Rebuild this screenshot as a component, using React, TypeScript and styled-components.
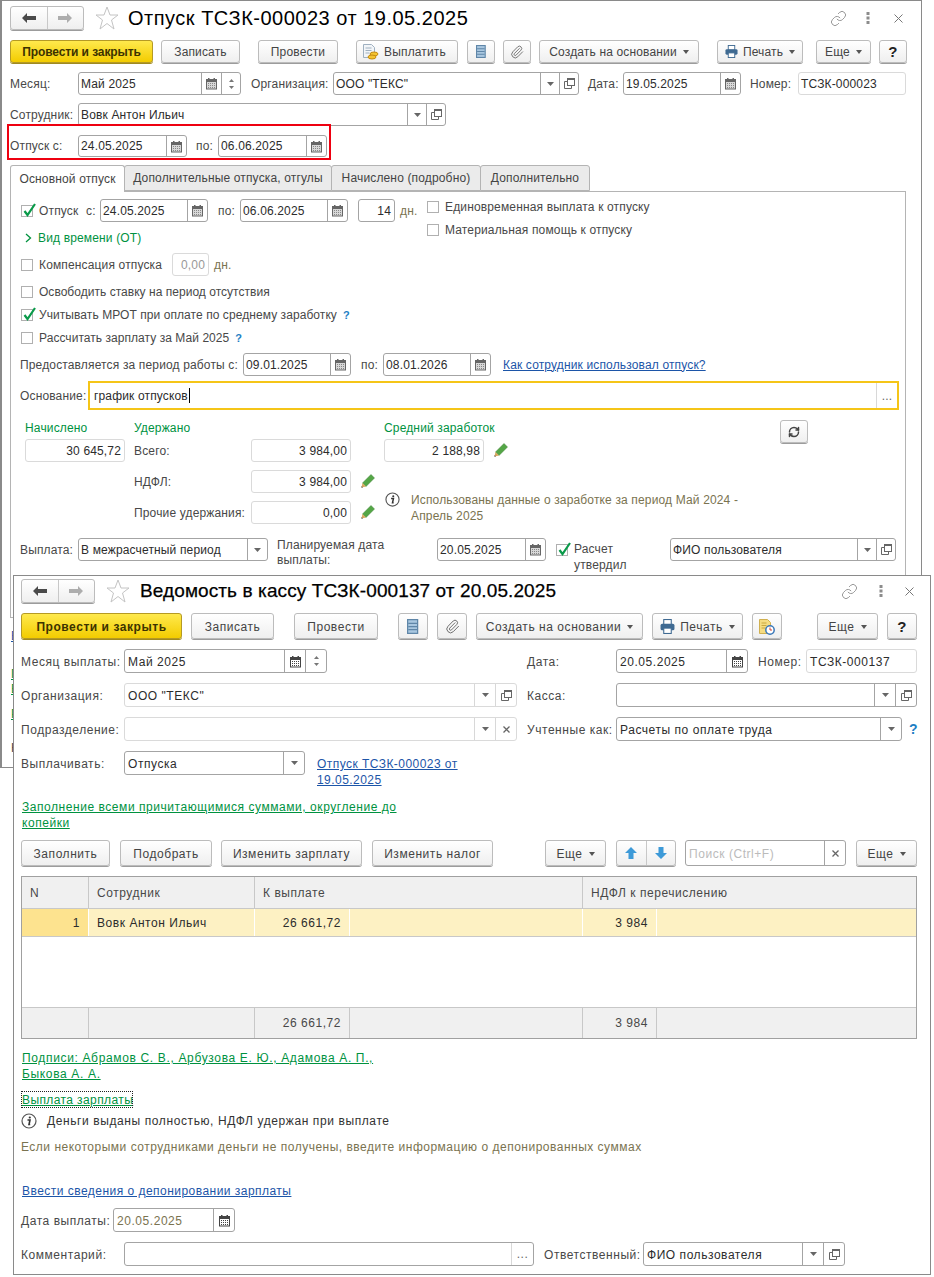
import * as React from 'react';
import styled, {createGlobalStyle} from 'styled-components';
import {Link as LinkIcon, Paperclip, RefreshCw} from 'lucide-react';

const Global = createGlobalStyle`
  html, body {
    margin: 0;
    background: white;
  }
  body {
    font-family: "Liberation Sans", Arial, sans-serif;
    font-size: 12px;
    color: #333;
  }
  * {
    box-sizing: border-box;
  }
`;

const Desktop = styled.div`
  position: relative;
  width: 934px;
  height: 1277px;
  overflow: hidden;
`;

const Win = styled.section<{$x: number; $y: number; $w: number; $h: number; $bl: number; $ls: number; $nudge: number; $pad: number}>`
  --nudge: ${p => p.$nudge}px;
  --pad: ${p => p.$pad}px;
  position: absolute;
  left: ${p => p.$x}px;
  top: ${p => p.$y}px;
  width: ${p => p.$w}px;
  height: ${p => p.$h}px;
  background: white;
  border: 1px solid #8a8a8a;
  border-left-width: ${p => p.$bl}px;
  letter-spacing: ${p => p.$ls}px;
  overflow: hidden;
`;

const Row = styled.div<{$mt: number; $h: number; $pl: number}>`
  position: relative;
  display: flex;
  align-items: center;
  margin-top: ${p => p.$mt}px;
  height: ${p => p.$h}px;
  padding-left: ${p => p.$pl}px;
`;

const NavGroup = styled.div<{$w: number; $h: number; $ml?: number}>`
  display: flex;
  flex: none;
  width: ${p => p.$w}px;
  height: ${p => p.$h}px;
  margin-left: ${p => p.$ml ?? 0}px;
  background: linear-gradient(#fff, #efefef);
  border: 1px solid #bcbcbc;
  border-radius: 3px;
  box-shadow: 0 1px 0 #9c9c9c;
`;

const NavPart = styled.div<{$divider?: boolean}>`
  flex: 1;
  display: flex;
  align-items: center;
  justify-content: center;
  border-right: ${p => (p.$divider ? '1px solid #c8c8c8' : 'none')};
`;

const StarWrap = styled.span<{$ml: number}>`
  flex: none;
  height: 24px;
  margin-left: ${p => p.$ml}px;
`;

const Title = styled.h1<{$size: number; $ml: number; $ls: number; $stroke: number; $pt: number}>`
  margin: 0 0 0 ${p => p.$ml}px;
  padding-top: ${p => p.$pt}px;
  font-size: ${p => p.$size}px;
  font-weight: 400;
  color: #000;
  letter-spacing: ${p => p.$ls}px;
  -webkit-text-stroke: ${p => p.$stroke}px #000;
  white-space: nowrap;
`;

const Controls = styled.div<{$pr: number}>`
  display: flex;
  align-items: center;
  margin-left: auto;
  padding-right: ${p => p.$pr}px;
  color: #7c7c7c;
`;

const Ctl = styled.span<{$ml?: number}>`
  display: flex;
  margin-left: ${p => p.$ml ?? 0}px;
`;

const Btn = styled.div<{$w: number; $ml?: number; $primary?: boolean; $ls?: number; $pr?: number}>`
  display: flex;
  flex: none;
  align-items: center;
  justify-content: center;
  gap: 5px;
  width: ${p => p.$w}px;
  height: 100%;
  margin-left: ${p => p.$ml ?? 0}px;
  padding-top: var(--nudge);
  padding-right: ${p => p.$pr ?? 0}px;
  border: 1px solid ${p => (p.$primary ? '#b59a24' : '#bcbcbc')};
  border-radius: 3px;
  background: ${p => (p.$primary ? 'linear-gradient(#ffe94d, #f3cc00)' : 'linear-gradient(#fff, #efefef)')};
  box-shadow: 0 1px 0 ${p => (p.$primary ? '#a08a20' : '#9c9c9c')};
  color: ${p => (p.$primary ? '#3c3200' : '#444')};
  font-weight: ${p => (p.$primary ? 700 : 400)};
  letter-spacing: ${p => (p.$ls === undefined ? 'inherit' : `${p.$ls}px`)};
  white-space: nowrap;
`;

const Caret = styled.span`
  width: 0;
  height: 0;
  margin-left: 1px;
  margin-top: 1px;
  border-left: 3.5px solid transparent;
  border-right: 3.5px solid transparent;
  border-top: 4px solid #555;
`;

const Help = styled.b`
  color: #222;
  font-size: 15px;
`;

const Label = styled.span<{$w: number; $ml?: number}>`
  flex: none;
  width: ${p => p.$w}px;
  margin-left: ${p => p.$ml ?? 0}px;
  padding-top: var(--nudge);
  color: #484848;
  white-space: nowrap;
`;

const WrapLabel = styled.span<{$w: number; $ml?: number; $mt: number; $lh: number}>`
  flex: none;
  align-self: flex-start;
  width: ${p => p.$w}px;
  margin-left: ${p => p.$ml ?? 0}px;
  margin-top: ${p => p.$mt}px;
  color: #484848;
  line-height: ${p => p.$lh}px;
`;

const Field = styled.div<{$w: number; $ml?: number; $light?: boolean}>`
  display: flex;
  flex: none;
  width: ${p => p.$w}px;
  height: 100%;
  margin-left: ${p => p.$ml ?? 0}px;
  border: 1px solid ${p => (p.$light ? '#dadada' : '#a4a4a4')};
  border-radius: 3px;
  background: white;
  overflow: hidden;
`;

const FocusField = styled(Field)`
  border: 2px solid #f5c518;
  border-radius: 0;
`;

const FieldText = styled.div<{$right?: boolean; $color?: string; $pl?: number}>`
  flex: 1;
  min-width: 0;
  display: flex;
  align-items: center;
  justify-content: ${p => (p.$right ? 'flex-end' : 'flex-start')};
  padding: var(--nudge) 3px 0 ${p => (p.$pl === undefined ? 'var(--pad)' : `${p.$pl}px`)};
  color: ${p => p.$color ?? '#2c2c2c'};
  white-space: nowrap;
`;

const TextCaret = styled.span`
  width: 1px;
  height: 15px;
  margin-left: 1px;
  background: #000;
`;

const Seg = styled.div<{$w: number; $light?: boolean}>`
  display: flex;
  flex: none;
  align-items: center;
  justify-content: center;
  width: ${p => p.$w}px;
  border-left: 1px solid ${p => (p.$light ? '#d8d8d8' : '#a4a4a4')};
  color: #666;
`;

const SpinSeg = styled(Seg)`
  flex-direction: column;
  gap: 4px;
`;

const Unit = styled.span<{$ml: number}>`
  margin-left: ${p => p.$ml}px;
  color: #7a7350;
`;

const Tabs = styled.div`
  display: flex;
  height: 26px;
  margin-top: 8px;
  padding-left: 8px;
`;

const Tab = styled.div<{$w: number; $active?: boolean}>`
  position: relative;
  z-index: ${p => (p.$active ? 1 : 0)};
  display: flex;
  align-items: center;
  justify-content: center;
  width: ${p => p.$w}px;
  height: ${p => (p.$active ? 27 : 26)}px;
  margin-right: -1px;
  border: 1px solid #b4b4b4;
  border-bottom: ${p => (p.$active ? 'none' : '1px solid #b4b4b4')};
  border-radius: 3px 3px 0 0;
  background: ${p => (p.$active ? 'white' : '#ebebeb')};
  color: #444;
`;

const Panel = styled.div`
  width: 896px;
  height: 427px;
  margin-left: 8px;
  border: 1px solid #b4b4b4;
`;

const TopBlock = styled.div`
  display: flex;
`;

const LeftCol = styled.div`
  width: 416px;
`;

const RightCol = styled.div`
  display: flex;
  flex-direction: column;
  gap: 7px;
  padding-top: 7px;
`;

const Check = styled.span<{$ml?: number; $mr: number}>`
  position: relative;
  flex: none;
  width: 12px;
  height: 12px;
  margin-left: ${p => p.$ml ?? 0}px;
  margin-right: ${p => p.$mr}px;
  border: 1px solid #b0b0b0;
  background: white;

  > svg {
    position: absolute;
    left: 0;
    top: -4px;
  }
`;

const Green = styled.span<{$ml?: number}>`
  margin-left: ${p => p.$ml ?? 0}px;
  color: #00923f;
  white-space: nowrap;
`;

const Hint = styled.b<{$ml: number; $size?: number}>`
  margin-left: ${p => p.$ml}px;
  color: #1e7fc4;
  font-size: ${p => p.$size ?? 11}px;
`;

const Plain = styled.span<{$ls?: number}>`
  color: #484848;
  letter-spacing: ${p => (p.$ls === undefined ? 'inherit' : `${p.$ls}px`)};
  white-space: nowrap;
`;

const Anchor = styled.a<{$color: string; $ml?: number; $lh?: number; $ls?: number; $mt?: number}>`
  display: inline-block;
  align-self: ${p => (p.$mt === undefined ? 'auto' : 'flex-start')};
  margin-top: ${p => p.$mt ?? 0}px;
  margin-left: ${p => p.$ml ?? 0}px;
  color: ${p => p.$color};
  line-height: ${p => p.$lh ?? 16}px;
  letter-spacing: ${p => (p.$ls === undefined ? 'inherit' : `${p.$ls}px`)};
  text-decoration: underline;
`;

const Numbers = styled.div`
  display: flex;
  margin-top: 10px;
  padding-left: 14px;
`;

const NumCol = styled.div<{$w: number}>`
  display: flex;
  flex: none;
  flex-direction: column;
  width: ${p => p.$w}px;
`;

const NumHead = styled.div`
  height: 16px;
  margin-bottom: 3px;
  color: #00923f;
  line-height: 16px;
`;

const NumRow = styled.div<{$mb?: number}>`
  display: flex;
  align-items: center;
  height: 23px;
  margin-bottom: ${p => p.$mb ?? 0}px;
`;

const Note = styled.div`
  display: flex;
  margin-top: 30px;
  color: #7a7350;
  line-height: 16px;
  white-space: nowrap;
`;

const InfoWrap = styled.span<{$ml: number; $mr: number}>`
  flex: none;
  margin-left: ${p => p.$ml}px;
  margin-right: ${p => p.$mr}px;
  height: 16px;
`;

const RedFrame = styled.div`
  position: absolute;
  left: 5px;
  top: -11px;
  width: 324px;
  height: 36px;
  border: 2px solid #ee0010;
  pointer-events: none;
`;

const Under = styled.div<{$mt: number}>`
  margin-top: ${p => p.$mt}px;
  padding-left: 9px;
  line-height: 12px;
  white-space: nowrap;
`;

const LinkBlock = styled.div<{$mt: number; $pl: number}>`
  margin-top: ${p => p.$mt}px;
  padding-left: ${p => p.$pl}px;
  line-height: 16px;
`;

const Dotted = styled.div`
  width: fit-content;
  height: 17px;
  margin-top: 9px;
  margin-left: 7px;
  padding-left: 1px;
  outline: 1px dotted #222;
  outline-offset: -1px;
  line-height: 19px;
  letter-spacing: 0.4px;
  color: #00923f;
  text-decoration: underline;
`;

const Message = styled.div<{$mt: number; $color: string; $ls: number}>`
  display: flex;
  align-items: center;
  height: 16px;
  margin-top: ${p => p.$mt}px;
  padding-left: 7px;
  color: ${p => p.$color};
  letter-spacing: ${p => p.$ls}px;
  white-space: nowrap;
`;

const Table = styled.div`
  display: flex;
  flex-direction: column;
  width: 896px;
  height: 163px;
  margin: 10px 0 0 7px;
  border: 1px solid #a0a0a0;
  color: #444;
`;

const TRow = styled.div<{$h: number; $line: string; $bg: string; $foot?: boolean}>`
  display: flex;
  flex: none;
  height: ${p => p.$h}px;
  background: ${p => p.$bg};
  border-top: ${p => (p.$foot ? `1px solid ${p.$line}` : 'none')};
  border-bottom: ${p => (p.$foot ? 'none' : `1px solid ${p.$line}`)};
`;

const Cell = styled.div<{$w?: number; $right?: boolean; $bg?: string; $line: string; $dark?: boolean}>`
  display: flex;
  flex: ${p => (p.$w ? 'none' : '1')};
  align-items: center;
  justify-content: ${p => (p.$right ? 'flex-end' : 'flex-start')};
  width: ${p => (p.$w ? `${p.$w}px` : 'auto')};
  padding: 0 8px;
  background: ${p => p.$bg ?? 'transparent'};
  border-right: 1px solid ${p => p.$line};
  color: ${p => (p.$dark ? '#2c2c2c' : '#484848')};
`;

const TEmpty = styled.div`
  flex: 1;
`;

const Calendar = ({dark}: {dark?: boolean}) => (
  <svg width="13" height="13" viewBox="0 0 13 13">
    <rect x="1.5" y="2.5" width="10" height="9.5" fill={dark ? '#fff' : '#d8d8d8'} stroke={dark ? '#444' : '#666'}/>
    <rect x="1.5" y="2.5" width="10" height="2.5" fill={dark ? '#444' : '#666'}/>
    <rect x="3" y="1" width="1.5" height="2" fill={dark ? '#444' : '#666'}/>
    <rect x="8.5" y="1" width="1.5" height="2" fill={dark ? '#444' : '#666'}/>
    <path d="M3 6.5h7M3 8.5h7M3 10.5h7" stroke={dark ? '#444' : '#888'} strokeDasharray="1 1"/>
  </svg>
);

const Arrow = ({dir}: {dir: 'left' | 'right'}) => (
  <svg width="14" height="10" viewBox="0 0 14 10">
    {dir === 'left'
      ? <path d="M0 5l5-5v3h9v4H5v3z" fill="#4a4a4a"/>
      : <path d="M14 5L9 0v3H0v4h9v3z" fill="#adadad"/>}
  </svg>
);

const Star = ({size}: {size: number}) => (
  <svg width={size} height={size} viewBox="0 0 24 24">
    <path d="M12 1l3 8h8l-6.500 5 2.500 9-7-5.500L5 23l2.500-9L1 9h8z" fill="white" stroke="#c4c4c4"/>
  </svg>
);

const Dots = () => (
  <svg width="4" height="14" viewBox="0 0 4 14">
    <path d="M0.500 1h3v3h-3zM0.500 5.500h3v3h-3zM0.500 10h3v3h-3z" fill="#8c8c8c"/>
  </svg>
);

const Close = () => (
  <svg width="9" height="9" viewBox="0 0 9 9">
    <path d="M0.500 0.500l8 8M8.500 0.500l-8 8" stroke="#777"/>
  </svg>
);

const SmallClose = () => (
  <svg width="7" height="7" viewBox="0 0 7 7">
    <path d="M0.500 0.500l6 6M6.500 0.500l-6 6" stroke="#666" strokeWidth="1.300"/>
  </svg>
);

const DropMark = () => (
  <svg width="7" height="4" viewBox="0 0 7 4">
    <path d="M0 0h7L3.500 4z" fill="#666"/>
  </svg>
);

const Spin = ({up}: {up?: boolean}) => (
  <svg width="5" height="3" viewBox="0 0 5 3">
    <path d={up ? 'M0 3h5L2.500 0z' : 'M0 0h5L2.500 3z'} fill="#777"/>
  </svg>
);

const OpenMark = () => (
  <svg width="11" height="11" viewBox="0 0 11 11" fill="none" stroke="#666">
    <path d="M3 3.500H0.500v7h7V8"/>
    <rect x="3.500" y="0.500" width="7" height="7" fill="white"/>
    <path d="M3.500 1.500h7" stroke="#666"/>
  </svg>
);

const ListIcon = ({size}: {size: number}) => (
  <svg width={size * 0.75} height={size} viewBox="0 0 9 12">
    <rect x="0.500" y="0.500" width="8" height="11" fill="#a9c7e0" stroke="#5f86a8"/>
    <path d="M1 3.500h7M1 6h7M1 8.500h7" stroke="#5f86a8"/>
  </svg>
);

const PrinterIcon = ({size}: {size: number}) => (
  <svg width={size} height={size} viewBox="0 0 14 14">
    <rect x="3.500" y="0.500" width="7" height="5" fill="white" stroke="#3f6a92"/>
    <rect x="0.500" y="4.500" width="13" height="6" rx="1.500" fill="#3f6a92"/>
    <rect x="3.500" y="8.500" width="7" height="5" fill="white" stroke="#3f6a92"/>
  </svg>
);

const CoinsDoc = () => (
  <svg width="17" height="17" viewBox="0 0 17 17">
    <path d="M1.500 1.500h8l3 3v10h-11z" fill="#f2f5f8" stroke="#9fb0c0"/>
    <path d="M3.500 5h6M3.500 7.500h6M3.500 10h4" stroke="#9fb0c0"/>
    <ellipse cx="12" cy="11" rx="4" ry="2" fill="#f4c430" stroke="#c48a10"/>
    <ellipse cx="10" cy="14" rx="4" ry="2" fill="#f4c430" stroke="#c48a10"/>
  </svg>
);

const ClockDoc = () => (
  <svg width="16" height="16" viewBox="0 0 16 16">
    <path d="M0.500 0.500h8l3 3v11h-11z" fill="#f5dc82" stroke="#d0b050"/>
    <path d="M2.500 4h5M2.500 6.500h5M2.500 9h4" stroke="#c8a840"/>
    <circle cx="11" cy="11" r="4.200" fill="white" stroke="#3a78b8" strokeWidth="1.500"/>
    <path d="M11 8.500V11h2" stroke="#d04030" fill="none"/>
  </svg>
);

const Pencil = () => (
  <svg width="14" height="14" viewBox="0 0 14 14">
    <path d="M10 0.500l3.500 3.500-8.500 8.500-3.500-3.500z" fill="#54a646" stroke="#3f8236" strokeWidth="0.500"/>
    <path d="M1.500 9l3.500 3.500L0.500 13.500z" fill="#d9a860"/>
    <path d="M0.500 12l1.500 1.500-1.500 0.300z" fill="#444"/>
  </svg>
);

const Info = ({size}: {size: number}) => (
  <svg width={size} height={size} viewBox="0 0 16 16">
    <circle cx="8" cy="8" r="7" fill="white" stroke="#555" strokeWidth="1.200"/>
    <path d="M6.500 7h2.500L8 11.500h1.200" fill="none" stroke="#333" strokeWidth="1.600"/>
    <circle cx="8.800" cy="4.500" r="1.100" fill="#333"/>
  </svg>
);

const CheckMark = () => (
  <svg width="16" height="16" viewBox="0 0 16 16">
    <path d="M2.500 9l3 4L13 2" fill="none" stroke="#0a9a4a" strokeWidth="2.200"/>
  </svg>
);

const Chevron = () => (
  <svg width="7" height="10" viewBox="0 0 7 10">
    <path d="M1 1l4.500 4L1 9" fill="none" stroke="#00923f" strokeWidth="1.300"/>
  </svg>
);

const BlueArrow = ({up}: {up?: boolean}) => (
  <svg width="12" height="12" viewBox="0 0 12 12">
    <path d={up ? 'M6 0l6 6H8.500v6h-5V6H0z' : 'M6 12l6-6H8.500V0h-5v6H0z'} fill="#3d9ad8"/>
  </svg>
);

const Calc = ({w, dark}: {w: number; dark?: boolean}) => (
  <Seg $w={w}><Calendar dark={dark}/></Seg>
);
const Drop = ({w, light}: {w: number; light?: boolean}) => (
  <Seg $w={w} $light={light}><DropMark/></Seg>
);
const Open = ({w, light}: {w: number; light?: boolean}) => (
  <Seg $w={w} $light={light}><OpenMark/></Seg>
);

const Nav = ({w, h}: {w: number; h: number}) => (
  <NavGroup $w={w} $h={h}>
    <NavPart $divider><Arrow dir="left"/></NavPart>
    <NavPart><Arrow dir="right"/></NavPart>
  </NavGroup>
);

const LeaveWindow = () => (
  <Win $x={0} $y={0} $w={922} $h={768} $bl={2} $ls={0.15} $nudge={0} $pad={2}>
    <Row $mt={5} $h={24} $pl={8}>
      <Nav w={74} h={24}/>
      <StarWrap $ml={11}><Star size={24}/></StarWrap>
      <Title $size={20} $ml={9} $ls={0.5} $stroke={0} $pt={1}>Отпуск ТСЗК-000023 от 19.05.2025</Title>
      <Controls $pr={18}>
        <Ctl><LinkIcon size={17} strokeWidth={1.1}/></Ctl>
        <Ctl $ml={19}><Dots/></Ctl>
        <Ctl $ml={24}><Close/></Ctl>
      </Controls>
    </Row>

    <Row $mt={10} $h={23} $pl={8}>
      <Btn $w={143} $primary $ls={-0.1}>Провести и закрыть</Btn>
      <Btn $w={79} $ml={8}>Записать</Btn>
      <Btn $w={80} $ml={18}>Провести</Btn>
      <Btn $w={102} $ml={18} $pr={6}><CoinsDoc/>Выплатить</Btn>
      <Btn $w={28} $ml={9}><ListIcon size={13}/></Btn>
      <Btn $w={28} $ml={8}><Paperclip size={14} strokeWidth={1.5} color="#666"/></Btn>
      <Btn $w={160} $ml={8}>Создать на основании<Caret/></Btn>
      <Btn $w={86} $ml={18}><PrinterIcon size={13}/>Печать<Caret/></Btn>
      <Btn $w={55} $ml={13}>Еще<Caret/></Btn>
      <Btn $w={28} $ml={8}><Help>?</Help></Btn>
    </Row>

    <Row $mt={9} $h={23} $pl={8}>
      <Label $w={68}>Месяц:</Label>
      <Field $w={163}>
        <FieldText>Май 2025</FieldText>
        <Calc w={20}/>
        <SpinSeg $w={19}><Spin up/><Spin/></SpinSeg>
      </Field>
      <Label $w={82} $ml={10}>Организация:</Label>
      <Field $w={246}>
        <FieldText>ООО "ТЕКС"</FieldText>
        <Drop w={19}/>
        <Open w={19}/>
      </Field>
      <Label $w={35} $ml={9}>Дата:</Label>
      <Field $w={118}>
        <FieldText>19.05.2025</FieldText>
        <Calc w={20}/>
      </Field>
      <Label $w={48} $ml={9}>Номер:</Label>
      <Field $w={108} $light>
        <FieldText>ТСЗК-000023</FieldText>
      </Field>
    </Row>

    <Row $mt={8} $h={23} $pl={8}>
      <Label $w={68}>Сотрудник:</Label>
      <Field $w={368}>
        <FieldText>Вовк Антон Ильич</FieldText>
        <Drop w={19}/>
        <Open w={19}/>
      </Field>
    </Row>

    <Row $mt={9} $h={22} $pl={8}>
      <Label $w={68}>Отпуск с:</Label>
      <Field $w={109}>
        <FieldText>24.05.2025</FieldText>
        <Calc w={20}/>
      </Field>
      <Label $w={22} $ml={9}>по:</Label>
      <Field $w={109}>
        <FieldText>06.06.2025</FieldText>
        <Calc w={20}/>
      </Field>
      <RedFrame/>
    </Row>

    <Tabs>
      <Tab $w={115} $active>Основной отпуск</Tab>
      <Tab $w={208}>Дополнительные отпуска, отгулы</Tab>
      <Tab $w={150}>Начислено (подробно)</Tab>
      <Tab $w={110}>Дополнительно</Tab>
    </Tabs>

    <Panel>
      <TopBlock>
        <LeftCol>
          <Row $mt={7} $h={23} $pl={10}>
            <Check $mr={6}><CheckMark/></Check>
            <Label $w={47}>Отпуск</Label>
            <Label $w={14}>с:</Label>
            <Field $w={108}>
              <FieldText>24.05.2025</FieldText>
              <Calc w={20}/>
            </Field>
            <Label $w={22} $ml={10}>по:</Label>
            <Field $w={108}>
              <FieldText>06.06.2025</FieldText>
              <Calc w={20}/>
            </Field>
            <Field $w={37} $ml={10}>
              <FieldText $right>14</FieldText>
            </Field>
            <Unit $ml={5}>дн.</Unit>
          </Row>
          <Row $mt={5} $h={22} $pl={14}>
            <Chevron/>
            <Green $ml={6}>Вид времени (ОТ)</Green>
          </Row>
          <Row $mt={4} $h={23} $pl={10}>
            <Check $mr={6}/>
            <Label $w={133}>Компенсация отпуска</Label>
            <Field $w={37} $light>
              <FieldText $right $color="#999">0,00</FieldText>
            </Field>
            <Unit $ml={5}>дн.</Unit>
          </Row>
        </LeftCol>
        <RightCol>
          <Row $mt={0} $h={16} $pl={0}><Check $mr={6}/><Plain>Единовременная выплата к отпуску</Plain></Row>
          <Row $mt={0} $h={16} $pl={0}><Check $mr={6}/><Plain>Материальная помощь к отпуску</Plain></Row>
        </RightCol>
      </TopBlock>
      <Row $mt={8} $h={16} $pl={10}>
        <Check $mr={6}/><Plain $ls={0.03}>Освободить ставку на период отсутствия</Plain>
      </Row>
      <Row $mt={7} $h={16} $pl={10}>
        <Check $mr={6}><CheckMark/></Check><Plain $ls={0.07}>Учитывать МРОТ при оплате по среднему заработку</Plain><Hint $ml={6}>?</Hint>
      </Row>
      <Row $mt={7} $h={16} $pl={10}>
        <Check $mr={6}/><Plain $ls={0.05}>Рассчитать зарплату за Май 2025</Plain><Hint $ml={6}>?</Hint>
      </Row>
      <Row $mt={7} $h={23} $pl={9}>
        <Label $w={223}>Предоставляется за период работы с:</Label>
        <Field $w={108}>
          <FieldText>09.01.2025</FieldText>
          <Calc w={20}/>
        </Field>
        <Label $w={22} $ml={10}>по:</Label>
        <Field $w={108}>
          <FieldText>08.01.2026</FieldText>
          <Calc w={20}/>
        </Field>
        <Anchor $color="#1c55a8" $ml={12}>Как сотрудник использовал отпуск?</Anchor>
      </Row>
      <Row $mt={5} $h={29} $pl={9}>
        <Label $w={68}>Основание:</Label>
        <FocusField $w={811}>
          <FieldText $pl={4}>график отпусков<TextCaret/></FieldText>
          <Seg $w={21} $light>...</Seg>
        </FocusField>
      </Row>

      <Numbers>
        <NumCol $w={109}>
          <NumHead>Начислено</NumHead>
          <NumRow><Field $w={100} $light><FieldText $right>30 645,72</FieldText></Field></NumRow>
        </NumCol>
        <NumCol $w={250}>
          <NumHead>Удержано</NumHead>
          <NumRow $mb={8}>
            <Label $w={117}>Всего:</Label>
            <Field $w={100} $light><FieldText $right>3 984,00</FieldText></Field>
          </NumRow>
          <NumRow $mb={8}>
            <Label $w={117}>НДФЛ:</Label>
            <Field $w={100} $light><FieldText $right>3 984,00</FieldText></Field>
            <InfoWrap $ml={10} $mr={0}><Pencil/></InfoWrap>
          </NumRow>
          <NumRow>
            <Label $w={117}>Прочие удержания:</Label>
            <Field $w={100} $light><FieldText $right>0,00</FieldText></Field>
            <InfoWrap $ml={10} $mr={0}><Pencil/></InfoWrap>
          </NumRow>
        </NumCol>
        <NumCol $w={396}>
          <NumHead>Средний заработок</NumHead>
          <NumRow>
            <Field $w={100} $light><FieldText $right>2 188,98</FieldText></Field>
            <InfoWrap $ml={10} $mr={0}><Pencil/></InfoWrap>
          </NumRow>
          <Note>
            <InfoWrap $ml={1} $mr={11}><Info size={15}/></InfoWrap>
            <span>Использованы данные о заработке за период Май 2024 -<br/>Апрель 2025</span>
          </Note>
        </NumCol>
        <NumCol $w={28}>
          <NumRow><Btn $w={28}><RefreshCw size={12} strokeWidth={3} color="#444"/></Btn></NumRow>
        </NumCol>
      </Numbers>

      <Row $mt={14} $h={23} $pl={9}>
        <Label $w={58}>Выплата:</Label>
        <Field $w={190}>
          <FieldText>В межрасчетный период</FieldText>
          <Drop w={20}/>
        </Field>
        <WrapLabel $w={160} $ml={9} $mt={0} $lh={15}>Планируемая дата<br/>выплаты:</WrapLabel>
        <Field $w={109}>
          <FieldText>20.05.2025</FieldText>
          <Calc w={20}/>
        </Field>
        <Check $ml={10} $mr={6}><CheckMark/></Check>
        <WrapLabel $w={96} $mt={3} $lh={16}>Расчет<br/>утвердил</WrapLabel>
        <Field $w={226}>
          <FieldText>ФИО пользователя</FieldText>
          <Drop w={19}/>
          <Open w={19}/>
        </Field>
      </Row>
    </Panel>

    <Under $mt={12}><Anchor $color="#1c55a8" $lh={12}>В</Anchor></Under>
    <Under $mt={26}><Anchor $color="#00923f" $lh={12}>П</Anchor></Under>
    <Under $mt={3}><Anchor $color="#00923f" $lh={12}>В</Anchor></Under>
    <Under $mt={13}><Anchor $color="#00923f" $lh={12}>Р</Anchor></Under>
    <Under $mt={22}><Plain>К</Plain></Under>
  </Win>
);

const PayrollWindow = () => (
  <Win $x={13} $y={575} $w={918} $h={700} $bl={1} $ls={0.55} $nudge={1} $pad={3}>
    <Row $mt={3} $h={24} $pl={7}>
      <Nav w={74} h={24}/>
      <StarWrap $ml={11}><Star size={24}/></StarWrap>
      <Title $size={19} $ml={10} $ls={0.1} $stroke={0.25} $pt={0}>Ведомость в кассу ТСЗК-000137 от 20.05.2025</Title>
      <Controls $pr={16}>
        <Ctl><LinkIcon size={17} strokeWidth={1.1}/></Ctl>
        <Ctl $ml={21}><Dots/></Ctl>
        <Ctl $ml={22}><Close/></Ctl>
      </Controls>
    </Row>

    <Row $mt={10} $h={26} $pl={7}>
      <Btn $w={161} $primary $ls={0.55}>Провести и закрыть</Btn>
      <Btn $w={83} $ml={9}>Записать</Btn>
      <Btn $w={84} $ml={20}>Провести</Btn>
      <Btn $w={30} $ml={20}><ListIcon size={15}/></Btn>
      <Btn $w={30} $ml={9}><Paperclip size={15} strokeWidth={1.5} color="#666"/></Btn>
      <Btn $w={167} $ml={9}>Создать на основании<Caret/></Btn>
      <Btn $w={91} $ml={9}><PrinterIcon size={15}/>Печать<Caret/></Btn>
      <Btn $w={30} $ml={9}><ClockDoc/></Btn>
      <Btn $w={61} $ml={35}>Еще<Caret/></Btn>
      <Btn $w={30} $ml={9}><Help>?</Help></Btn>
    </Row>

    <Row $mt={10} $h={24} $pl={7}>
      <Label $w={103}>Месяц выплаты:</Label>
      <Field $w={203}>
        <FieldText>Май 2025</FieldText>
        <Calc w={21} dark/>
        <SpinSeg $w={21}><Spin up/><Spin/></SpinSeg>
      </Field>
      <Label $w={89} $ml={200}>Дата:</Label>
      <Field $w={132}>
        <FieldText>20.05.2025</FieldText>
        <Calc w={21} dark/>
      </Field>
      <Label $w={48} $ml={10}>Номер:</Label>
      <Field $w={111} $light>
        <FieldText>ТСЗК-000137</FieldText>
      </Field>
    </Row>

    <Row $mt={10} $h={24} $pl={7}>
      <Label $w={103}>Организация:</Label>
      <Field $w={393} $light>
        <FieldText>ООО "ТЕКС"</FieldText>
        <Drop w={21} light/>
        <Open w={21} light/>
      </Field>
      <Label $w={89} $ml={10}>Касса:</Label>
      <Field $w={301}>
        <FieldText/>
        <Drop w={21}/>
        <Open w={21}/>
      </Field>
    </Row>

    <Row $mt={10} $h={24} $pl={7}>
      <Label $w={103}>Подразделение:</Label>
      <Field $w={393} $light>
        <FieldText/>
        <Drop w={21} light/>
        <Seg $w={21} $light><SmallClose/></Seg>
      </Field>
      <Label $w={89} $ml={10}>Учтенные как:</Label>
      <Field $w={286}>
        <FieldText>Расчеты по оплате труда</FieldText>
        <Drop w={21}/>
      </Field>
      <Hint $ml={7} $size={14}>?</Hint>
    </Row>

    <Row $mt={10} $h={24} $pl={7}>
      <Label $w={103}>Выплачивать:</Label>
      <Field $w={181}>
        <FieldText>Отпуска</FieldText>
        <Drop w={21}/>
      </Field>
      <Anchor $color="#1c55a8" $ml={12} $mt={5} $ls={0.45}>
        Отпуск ТСЗК-000023 от<br/>19.05.2025
      </Anchor>
    </Row>

    <LinkBlock $mt={24} $pl={8}>
      <Anchor $color="#00923f">Заполнение всеми причитающимися суммами, округление до<br/>копейки</Anchor>
    </LinkBlock>

    <Row $mt={9} $h={26} $pl={7}>
      <Btn $w={89}>Заполнить</Btn>
      <Btn $w={92} $ml={10}>Подобрать</Btn>
      <Btn $w={141} $ml={9}>Изменить зарплату</Btn>
      <Btn $w={121} $ml={10}>Изменить налог</Btn>
      <Btn $w={61} $ml={52}>Еще<Caret/></Btn>
      <NavGroup $w={60} $h={26} $ml={10}>
        <NavPart $divider><BlueArrow up/></NavPart>
        <NavPart><BlueArrow/></NavPart>
      </NavGroup>
      <Field $w={161} $ml={9}>
        <FieldText $color="#bbb">Поиск (Ctrl+F)</FieldText>
        <Seg $w={21}><SmallClose/></Seg>
      </Field>
      <Btn $w={61} $ml={10}>Еще<Caret/></Btn>
    </Row>

    <Table>
      <TRow $h={32} $line="#c8c8c8" $bg="#f0f0f0">
        <Cell $w={67} $line="#c8c8c8">N</Cell>
        <Cell $w={166} $line="#c8c8c8">Сотрудник</Cell>
        <Cell $w={328} $line="#c8c8c8">К выплате</Cell>
        <Cell $line="transparent">НДФЛ к перечислению</Cell>
      </TRow>
      <TRow $h={28} $line="#c8c8c8" $bg="white">
        <Cell $w={67} $right $bg="#fde38f" $line="white" $dark>1</Cell>
        <Cell $w={166} $bg="#fdf1c3" $line="white" $dark>Вовк Антон Ильич</Cell>
        <Cell $w={95} $right $bg="#fdf1c3" $line="white" $dark>26 661,72</Cell>
        <Cell $w={233} $bg="#fdf1c3" $line="white"/>
        <Cell $w={74} $right $bg="#fdf1c3" $line="white" $dark>3 984</Cell>
        <Cell $bg="#fdf1c3" $line="transparent"/>
      </TRow>
      <TEmpty/>
      <TRow $h={31} $line="#c8c8c8" $bg="#f0f0f0" $foot>
        <Cell $w={67} $line="#c8c8c8"/>
        <Cell $w={166} $line="#c8c8c8"/>
        <Cell $w={95} $right $line="#c8c8c8">26 661,72</Cell>
        <Cell $w={233} $line="#c8c8c8"/>
        <Cell $w={74} $right $line="#c8c8c8">3 984</Cell>
        <Cell $line="transparent"/>
      </TRow>
    </Table>

    <LinkBlock $mt={11} $pl={8}>
      <Anchor $color="#00923f" $ls={0.65}>Подписи: Абрамов С. В., Арбузова Е. Ю., Адамова А. П.,<br/>Быкова А. А.</Anchor>
    </LinkBlock>
    <Dotted>Выплата зарплаты</Dotted>
    <Message $mt={5} $color="#333" $ls={0.6}>
      <InfoWrap $ml={0} $mr={10}><Info size={16}/></InfoWrap>
      Деньги выданы полностью, НДФЛ удержан при выплате
    </Message>
    <Message $mt={10} $color="#7a7350" $ls={0.5}>
      Если некоторыми сотрудниками деньги не получены, введите информацию о депонированных суммах
    </Message>
    <LinkBlock $mt={28} $pl={8}>
      <Anchor $color="#1c55a8" $ls={0.47}>Ввести сведения о депонировании зарплаты</Anchor>
    </LinkBlock>

    <Row $mt={9} $h={24} $pl={7}>
      <Label $w={92}>Дата выплаты:</Label>
      <Field $w={122}>
        <FieldText $color="#7a7350">20.05.2025</FieldText>
        <Calc w={21} dark/>
      </Field>
    </Row>
    <Row $mt={10} $h={24} $pl={7}>
      <Label $w={103}>Комментарий:</Label>
      <Field $w={410}>
        <FieldText/>
        <Seg $w={22} $light>...</Seg>
      </Field>
      <Label $w={99} $ml={10}>Ответственный:</Label>
      <Field $w={202}>
        <FieldText>ФИО пользователя</FieldText>
        <Drop w={21}/>
        <Open w={21}/>
      </Field>
    </Row>
  </Win>
);

function App() {
  return (
    <Desktop>
      <Global/>
      <LeaveWindow/>
      <PayrollWindow/>
    </Desktop>
  );
}

export default App;
